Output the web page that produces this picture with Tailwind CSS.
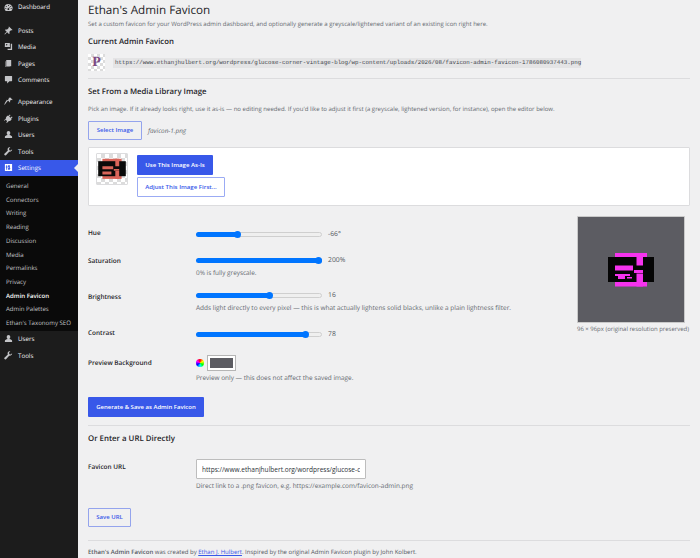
<!DOCTYPE html>
<html><head><meta charset="utf-8"><script src="https://cdn.jsdelivr.net/npm/@tailwindcss/browser@4"></script></head>
<body class="m-0 bg-[#f0f0f1] font-['Open_Sans','Noto_Sans',sans-serif] text-[#3c434a] [text-rendering:geometricPrecision]">
<div class="flex h-[558px] w-[700px] overflow-hidden">
<aside class="w-[78px] shrink-0 bg-[#1c1c1c] text-[6.200px] text-[#f0f0f1]">
  <nav class="flex flex-col pt-0">
    <a class="flex h-[14px] items-center gap-[5px] pl-[4px]"><svg class="h-[9px] w-[9px] text-[#c3c4c7]" viewBox="0 0 20 20" fill="currentColor"><path d="M10 2a9 9 0 0 0-9 9c0 2.6 1 4.8 2.7 6.5h12.6A9 9 0 0 0 10 2zm0 2a1.2 1.2 0 1 1 0 2.4A1.2 1.2 0 0 1 10 4zM5 6.5a1.2 1.2 0 1 1 0 2.4 1.2 1.2 0 0 1 0-2.4zm10 0a1.2 1.2 0 1 1 0 2.4 1.2 1.2 0 0 1 0-2.4zM4 11a1.2 1.2 0 1 1 0 2.4A1.2 1.2 0 0 1 4 11zm12 0a1.2 1.2 0 1 1 0 2.4 1.2 1.2 0 0 1 0-2.4zm-2-3-3 4.2a2 2 0 1 1-1.4-.6L14 8z"/></svg>Dashboard</a>
    <div class="h-[8px]"></div>
    <a class="flex h-[16.5px] items-center gap-[5px] pl-[4px]"><svg class="h-[9px] w-[9px] text-[#c3c4c7]" viewBox="0 0 20 20" fill="currentColor"><path d="M11 1l8 8-2 1-1-1-4 4 .5 3.5L11 18l-4-4-5 5-1-1 5-5-4-4 1.500-1.500L7 8l4-4-1-1z"/></svg>Posts</a>
    <a class="flex h-[16.5px] items-center gap-[5px] pl-[4px]"><svg class="h-[9px] w-[9px] text-[#c3c4c7]" viewBox="0 0 20 20" fill="currentColor"><path d="M2 2h11v9H2zm4 2.500a1.500 1.500 0 1 0 0 3 1.500 1.500 0 0 0 0-3zM15 4h3v14H8v-3h7z"/><path d="M13 11H2V8l3 2 3-3 5 2z"/></svg>Media</a>
    <a class="flex h-[16.5px] items-center gap-[5px] pl-[4px]"><svg class="h-[9px] w-[9px] text-[#c3c4c7]" viewBox="0 0 20 20" fill="currentColor"><path d="M5 2h11v14H5zM3 5v13h10v-1H4V5z"/></svg>Pages</a>
    <a class="flex h-[16.5px] items-center gap-[5px] pl-[4px]"><svg class="h-[9px] w-[9px] text-[#c3c4c7]" viewBox="0 0 20 20" fill="currentColor"><path d="M3 2h14a1 1 0 0 1 1 1v10a1 1 0 0 1-1 1h-5l-5 5v-5H3a1 1 0 0 1-1-1V3a1 1 0 0 1 1-1z"/></svg>Comments</a>
    <div class="h-[5.500px]"></div>
    <a class="flex h-[16.5px] items-center gap-[5px] pl-[4px]"><svg class="h-[9px] w-[9px] text-[#c3c4c7]" viewBox="0 0 20 20" fill="currentColor"><path d="M14 1l5 5-1 1-2-1-3 3 1 2-1 1-4-4-5 6c-1 2-2 3-3 4 0-2 0-3 1-4l1-3 3-3-1-1 1-1 2 1 3-3-1-2z"/></svg>Appearance</a>
    <a class="flex h-[16.5px] items-center gap-[5px] pl-[4px]"><svg class="h-[9px] w-[9px] text-[#c3c4c7]" viewBox="0 0 20 20" fill="currentColor"><path d="M13 1l1.500 1.500-3 3 3 3 3-3L19 7l-3 3 1 1c-1 3-4 5-7 5l-1 1-2.500 3L5 18.500 7 16l-3-3-3 2-1-1 3-2.500 1-1c0-3 2-6 5-7l1 1z"/></svg>Plugins</a>
    <a class="flex h-[16.5px] items-center gap-[5px] pl-[4px]"><svg class="h-[9px] w-[9px] text-[#c3c4c7]" viewBox="0 0 20 20" fill="currentColor"><path d="M10 2a4 4 0 0 1 4 4c0 2-1 4-2 5 3 .5 6 2 6 4v3H2v-3c0-2 3-3.500 6-4-1-1-2-3-2-5a4 4 0 0 1 4-4z"/></svg>Users</a>
    <a class="flex h-[16.5px] items-center gap-[5px] pl-[4px]"><svg class="h-[9px] w-[9px] text-[#c3c4c7]" viewBox="0 0 20 20" fill="currentColor"><path d="M18 5l-3 3-3-1-1-3 3-3c-3-1-6 1-6 4 0 1 0 2 .5 2.500L1 15c-1 1-.5 2.500 1 3.500 1 .7 2.200.5 3-.5l6.500-7.500c3 1 7-2 6.500-5.500z"/></svg>Tools</a>
    <a class="relative flex h-[16.5px] items-center gap-[5px] bg-[#3858e9] pl-[4px] text-white"><svg class="h-[9px] w-[9px]" viewBox="0 0 20 20" fill="currentColor"><path fill-rule="evenodd" d="M2 2h16v16H2zm3 3v3H4v2h1v5h2v-5h1V8H7V5zm4 0v5h2v5h2v-2h1v-2h-1V5zm-0 6v4h2v-4z"/></svg>Settings<span class="absolute right-0 top-[4px] h-0 w-0 border-y-[4px] border-r-[4px] border-y-transparent border-r-[#f0f0f1]"></span></a>
    <div class="flex flex-col whitespace-nowrap bg-[#0a0a0a] pt-[3px] pb-[1px] pl-[6px] text-[6.100px] leading-[13.700px] text-[#c3c4c7]">
      <a>General</a><a>Connectors</a><a>Writing</a><a>Reading</a><a>Discussion</a><a>Media</a><a>Permalinks</a><a>Privacy</a><a class="font-semibold text-white">Admin Favicon</a><a>Admin Palettes</a><a>Ethan's Taxonomy SEO</a>
    </div>
    <a class="flex h-[16.5px] items-center gap-[5px] pl-[4px]"><svg class="h-[9px] w-[9px] text-[#c3c4c7]" viewBox="0 0 20 20" fill="currentColor"><path d="M10 2a4 4 0 0 1 4 4c0 2-1 4-2 5 3 .5 6 2 6 4v3H2v-3c0-2 3-3.500 6-4-1-1-2-3-2-5a4 4 0 0 1 4-4z"/></svg>Users</a>
    <a class="flex h-[16.5px] items-center gap-[5px] pl-[4px]"><svg class="h-[9px] w-[9px] text-[#c3c4c7]" viewBox="0 0 20 20" fill="currentColor"><path d="M18 5l-3 3-3-1-1-3 3-3c-3-1-6 1-6 4 0 1 0 2 .5 2.500L1 15c-1 1-.5 2.500 1 3.500 1 .7 2.200.5 3-.5l6.500-7.500c3 1 7-2 6.500-5.500z"/></svg>Tools</a>
  </nav>
</aside>
<main class="w-[622px] pl-[10px] pr-[10px]">
  <h1 class="h-[21px] text-[11.700px] font-normal leading-[20px] text-[#1d2327]">Ethan's Admin Favicon</h1>
  <p class="h-[11px] whitespace-nowrap text-[6.020px] leading-[7px] text-[#646970]">Set a custom favicon for your WordPress admin dashboard, and optionally generate a greyscale/lightened variant of an existing icon right here.</p>
  <h2 class="mt-[3px] h-[14px] text-[7.750px] font-semibold leading-[14px] text-[#1d2327]">Current Admin Favicon</h2>
  <div class="mt-[5px] flex h-[17px] items-center gap-[8px]">
    <div class="flex h-[17px] w-[17px] items-center justify-center bg-[repeating-conic-gradient(#dcdcdc_0_25%,#fff_0_50%)] bg-[length:6px_6px] font-['Liberation_Serif',serif] text-[14px] font-bold leading-none text-[#7b4a83]">P</div>
    <code class="flex h-[10px] w-[468px] items-center whitespace-nowrap bg-[#e4e4e5] pl-[2px] font-['Liberation_Mono',monospace] text-[5.800px] leading-none text-[#3c434a]">https://www.ethanjhulbert.org/wordpress/glucose-corner-vintage-blog/wp-content/uploads/2026/08/favicon-admin-favicon-1786080937443.png</code>
  </div>
  <hr class="mt-[7px] border-0 border-t border-[#dcdcde]">
  <h2 class="mt-[6px] h-[14px] text-[7.750px] font-semibold leading-[14px] text-[#1d2327]">Set From a Media Library Image</h2>
  <p class="mt-[5px] h-[10px] whitespace-nowrap text-[6.040px] leading-[10px] text-[#646970]">Pick an image. If it already looks right, use it as-is — no editing needed. If you'd like to adjust it first (a greyscale, lightened version, for instance), open the editor below.</p>
  <div class="mt-[7px] flex h-[19px] items-center gap-[6px]">
    <button class="flex h-[19px] w-[54px] items-center justify-center rounded-[1px] border border-[#3858e9]/50 bg-transparent text-[6px] font-semibold text-[#3858e9]">Select Image</button>
    <span class="text-[6.400px] italic text-[#646970]">favicon-1.png</span>
  </div>
  <section class="mt-[7px] flex h-[59px] gap-[9px] rounded-[1px] border border-[#dcdcde] bg-white pl-[7px] pt-[5px]">
    <div class="flex h-[32px] w-[32px] items-center justify-center rounded-[1px] border border-[#dcdcde] bg-[repeating-conic-gradient(#dcdcdc_0_25%,#fff_0_50%)] bg-[length:8px_8px]">
      <svg class="h-[30px] w-[30px]" viewBox="0 0 50 50"><rect x="9" y="8" width="32" height="33.500" fill="#d9655a"/><rect x="2" y="12" width="46" height="25" fill="#0a0a0a"/><path d="M30.500 8H37v12.500h-6.500zM30.500 28.500H37V41.500h-6.500zM9 20.500h18v5H9zM9 29h15v5H9zM28 25h9v3h-9z" fill="#d9655a"/></svg>
    </div>
    <div class="flex flex-col gap-[2px] pt-[2px]">
      <button class="flex h-[20px] w-[76px] items-center justify-center whitespace-nowrap rounded-[1px] bg-[#3858e9] text-[6.100px] font-semibold text-white">Use This Image As-Is</button>
      <button class="flex h-[20px] w-[88px] items-center justify-center whitespace-nowrap rounded-[1px] border border-[#3858e9]/50 text-[6.100px] font-semibold text-[#3858e9]">Adjust This Image First...</button>
    </div>
  </section>
  <div class="flex gap-0">
    <div class="w-[489px] shrink-0">
      <div class="mt-[20px] flex h-[20px] items-start"><label class="w-[108px] pt-[2px] text-[6.450px] font-semibold leading-[10px] text-[#1d2327]">Hue</label>
        <div class="flex items-center pt-[5px]"><div class="relative h-[5px] w-[126px] rounded-full border border-[#cfcfcf] bg-[#efefef]"><div class="absolute -top-px -left-px h-[5px] w-[41px] rounded-full bg-[#0075ff]"></div><div class="absolute -top-[2px] left-[36.500px] h-[7px] w-[7px] rounded-full bg-[#0075ff]"></div></div><span class="ml-[6px] text-[6.800px] leading-[6px] text-[#50575e]">-66°</span></div></div>
      <div class="mt-[7px] flex h-[36px] items-start"><label class="w-[108px] pt-[3px] text-[6.450px] font-semibold leading-[10px] text-[#1d2327]">Saturation</label>
        <div><div class="flex items-center pt-[4px]"><div class="relative h-[5px] w-[126px] rounded-full bg-[#0075ff]"><div class="absolute -top-[1px] right-[.5px] h-[7px] w-[7px] rounded-full bg-[#0075ff]"></div></div><span class="ml-[6px] text-[6.800px] leading-[6px] text-[#50575e]">200%</span></div><p class="mt-[5px] text-[6.400px] leading-[10px] text-[#646970]">0% is fully greyscale.</p></div></div>
      <div class="flex h-[38px] items-start"><label class="w-[108px] pt-[3px] text-[6.450px] font-semibold leading-[10px] text-[#1d2327]">Brightness</label>
        <div><div class="flex items-center pt-[3px]"><div class="relative h-[5px] w-[126px] rounded-full border border-[#cfcfcf] bg-[#efefef]"><div class="absolute -top-px -left-px h-[5px] w-[73px] rounded-full bg-[#0075ff]"></div><div class="absolute -top-[2px] left-[68.500px] h-[7px] w-[7px] rounded-full bg-[#0075ff]"></div></div><span class="ml-[6px] text-[6.800px] leading-[6px] text-[#50575e]">16</span></div><p class="mt-[5px] whitespace-nowrap text-[6.480px] leading-[10px] text-[#646970]">Adds light directly to every pixel — this is what actually lightens solid blacks, unlike a plain lightness filter.</p></div></div>
      <div class="flex h-[26px] items-start"><label class="w-[108px] pt-[1px] text-[6.450px] font-semibold leading-[10px] text-[#1d2327]">Contrast</label>
        <div class="flex items-center pt-[4px]"><div class="relative h-[5px] w-[126px] rounded-full border border-[#cfcfcf] bg-[#efefef]"><div class="absolute -top-px -left-px h-[5px] w-[109px] rounded-full bg-[#0075ff]"></div><div class="absolute -top-[2px] left-[104.500px] h-[7px] w-[7px] rounded-full bg-[#0075ff]"></div></div><span class="ml-[6px] text-[6.800px] leading-[6px] text-[#50575e]">78</span></div></div>
      <div class="flex h-[33px] items-start"><label class="w-[108px] pt-[5px] text-[6.450px] font-semibold leading-[10px] text-[#1d2327]">Preview Background</label>
        <div class="pt-[2px]"><div class="flex items-center gap-[3px]"><span class="h-[8px] w-[8px] rounded-full bg-[conic-gradient(#f00,#ff0,#0f0,#0ff,#00f,#f0f,#f00)]"></span><div class="h-[16px] w-[29px] border border-[#b5b5b5] bg-white p-[2px]"><div class="h-full w-full bg-[#5c5c62]"></div></div></div><p class="mt-[2px] text-[6.450px] leading-[10px] text-[#646970]">Preview only — this does not affect the saved image.</p></div></div>
    </div>
    <div class="pt-[10px]">
      <div class="flex h-[107px] w-[108px] items-center justify-center rounded-[1px] border border-[#c9c9c9] bg-[#5c5c62]">
        <svg class="h-[50px] w-[50px]" viewBox="0 0 50 50"><rect x="9" y="8" width="32" height="33.500" fill="#f533ee"/><rect x="2" y="12" width="46" height="25" fill="#050505"/><path d="M30.500 8H37v12.500h-6.500zM30.500 28.500H37V41.500h-6.500zM9 20.500h18v5H9zM9 29h15v2H9zM12 31h7v3h-7zM21 32h5v1.500h-5zM28 25h9v3h-9z" fill="#f533ee"/></svg>
      </div>
      <p class="mt-[1px] whitespace-nowrap text-[5.960px] leading-[10px] text-[#646970]">96 × 96px (original resolution preserved)</p>
    </div>
  </div>
  <button class="mt-[11px] flex h-[20px] w-[116px] items-center justify-center whitespace-nowrap rounded-[1px] bg-[#3858e9] text-[5.970px] font-semibold text-white">Generate &amp; Save as Admin Favicon</button>
  <hr class="mt-[8px] border-0 border-t border-[#dcdcde]">
  <h2 class="mt-[6px] h-[14px] text-[7.850px] font-semibold leading-[14px] text-[#1d2327]">Or Enter a URL Directly</h2>
  <div class="mt-[13px] flex h-[43px] items-start">
    <label class="w-[108px] pt-[3px] text-[6.450px] font-semibold leading-[10px] text-[#1d2327]">Favicon URL</label>
    <div><input type="text" value="https://www.ethanjhulbert.org/wordpress/glucose-corner-vintage-blog/wp-content/uploads/2026/08/favicon-admin-favicon-1786080937443.png" class="block h-[20px] w-[170px] rounded-[1px] border border-[#bdbdbd] bg-white px-[5px] text-[6.550px] text-[#2c3338]"><p class="mt-[2px] whitespace-nowrap text-[6.450px] leading-[10px] text-[#646970]">Direct link to a .png favicon, e.g. https://example.com/favicon-admin.png</p></div>
  </div>
  <button class="mt-[6px] flex h-[19px] w-[43px] items-center justify-center rounded-[1px] border border-[#3858e9]/50 text-[6px] font-semibold text-[#3858e9]">Save URL</button>
  <hr class="mt-[13px] border-0 border-t border-[#dcdcde]">
  <p class="mt-[6px] whitespace-nowrap text-[6px] leading-[10px] text-[#50575e]"><span class="font-semibold">Ethan's Admin Favicon</span> was created by <a class="text-[#3858e9] underline">Ethan J. Hulbert</a>. Inspired by the original Admin Favicon plugin by John Kolbert.</p>
</main>
</div>
</body></html>
